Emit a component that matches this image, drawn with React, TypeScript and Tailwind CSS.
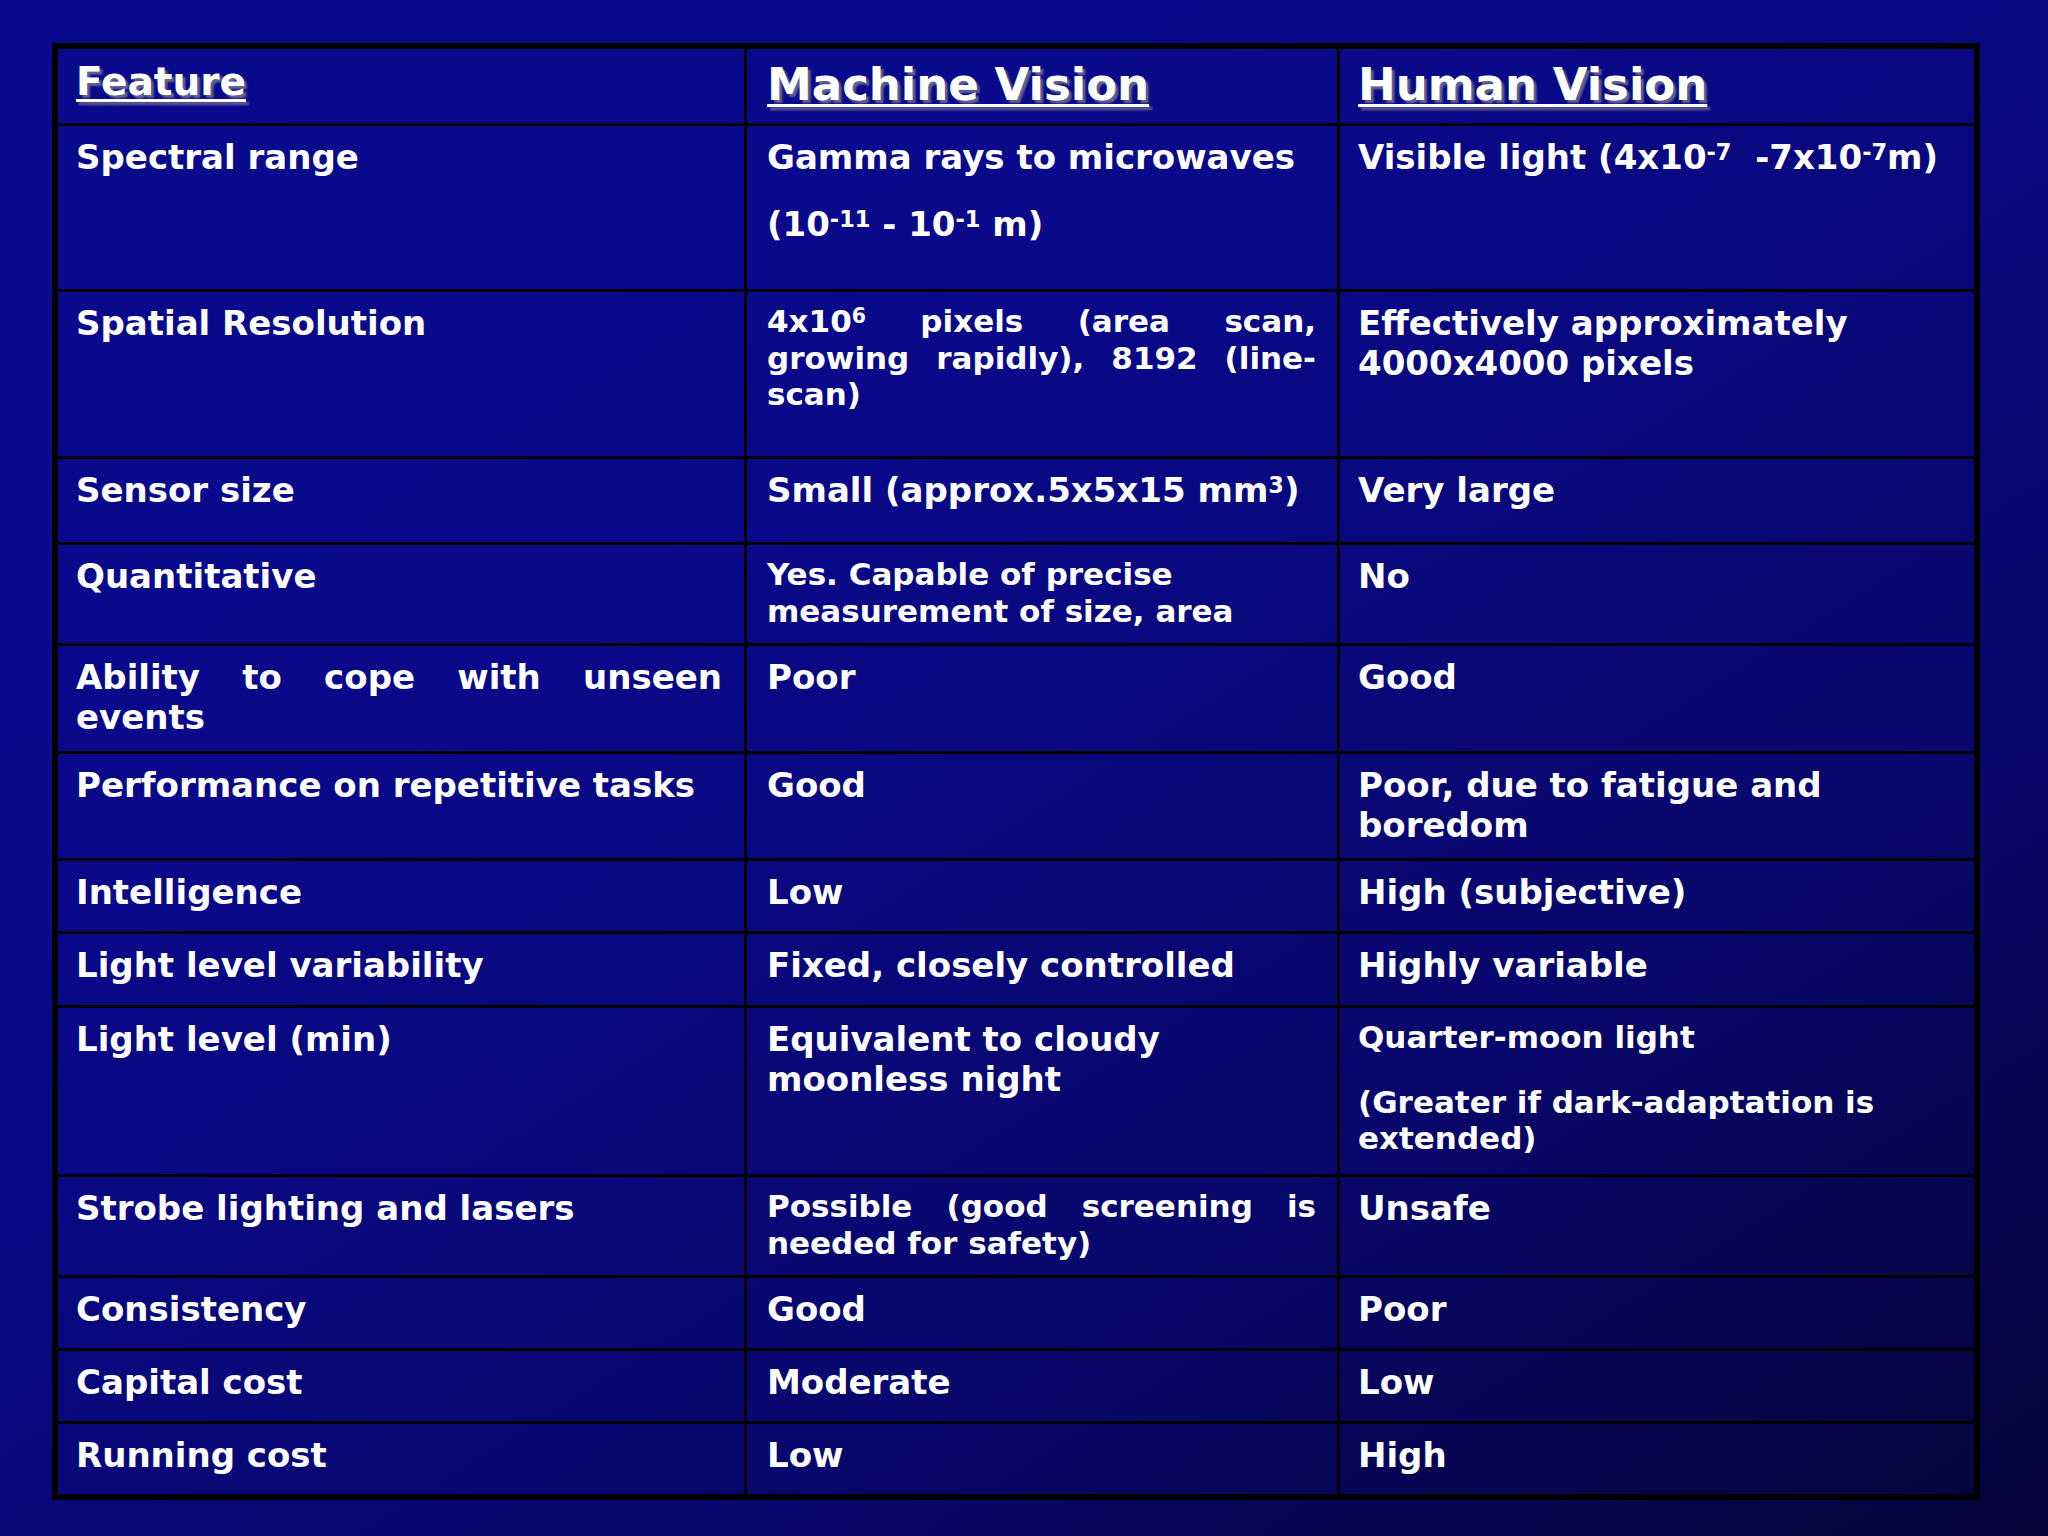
import React from 'react';

type Row = {
  height: string;
  feature: React.ReactNode;
  machine: React.ReactNode;
  human: React.ReactNode;
};

const body = 'text-[34px] leading-[40px]';
const small = 'text-[31px] leading-[36.5px]';
const justLine = 'block text-justify [text-align-last:justify]';

const Sup = ({ children }: { children: React.ReactNode }) => (
  <sup className="text-[66%] top-[-0.42em]">{children}</sup>
);

const rows: Row[] = [
  {
    height: 'h-[166px]',
    feature: <p className={body}>Spectral range</p>,
    machine: (
      <div className={body}>
        <p>Gamma rays to microwaves</p>
        <p className="mt-[27px]">
          (10<Sup>-11</Sup> - 10<Sup>-1</Sup> m)
        </p>
      </div>
    ),
    human: (
      <p className={body}>
        Visible light (4x10<Sup>-7</Sup>&nbsp; -7x10<Sup>-7</Sup>m)
      </p>
    ),
  },
  {
    height: 'h-[167px]',
    feature: <p className={body}>Spatial Resolution</p>,
    machine: (
      <div className={small}>
        <span className={justLine}>
          4x10<Sup>6</Sup> pixels (area scan,
        </span>
        <span className={justLine}>growing rapidly), 8192 (line-</span>
        <span className="block">scan)</span>
      </div>
    ),
    human: (
      <p className={body}>
        Effectively approximately
        <br />
        4000x4000 pixels
      </p>
    ),
  },
  {
    height: 'h-[86px]',
    feature: <p className={body}>Sensor size</p>,
    machine: (
      <p className={body}>
        Small (approx.5x5x15 mm<Sup>3</Sup>)
      </p>
    ),
    human: <p className={body}>Very large</p>,
  },
  {
    height: 'h-[101px]',
    feature: <p className={body}>Quantitative</p>,
    machine: (
      <p className={small}>
        Yes. Capable of precise
        <br />
        measurement of size, area
      </p>
    ),
    human: <p className={body}>No</p>,
  },
  {
    height: 'h-[108px]',
    feature: (
      <div className={body}>
        <span className={justLine}>Ability to cope with unseen</span>
        <span className="block">events</span>
      </div>
    ),
    machine: <p className={body}>Poor</p>,
    human: <p className={body}>Good</p>,
  },
  {
    height: 'h-[107px]',
    feature: <p className={body}>Performance on repetitive tasks</p>,
    machine: <p className={body}>Good</p>,
    human: (
      <p className={body}>
        Poor, due to fatigue and
        <br />
        boredom
      </p>
    ),
  },
  {
    height: 'h-[73px]',
    feature: <p className={body}>Intelligence</p>,
    machine: <p className={body}>Low</p>,
    human: <p className={body}>High (subjective)</p>,
  },
  {
    height: 'h-[74px]',
    feature: <p className={body}>Light level variability</p>,
    machine: <p className={body}>Fixed, closely controlled</p>,
    human: <p className={body}>Highly variable</p>,
  },
  {
    height: 'h-[169px]',
    feature: <p className={body}>Light level (min)</p>,
    machine: (
      <p className={body}>
        Equivalent to cloudy
        <br />
        moonless night
      </p>
    ),
    human: (
      <div className={small}>
        <p>Quarter-moon light</p>
        <p className="mt-[28px]">
          (Greater if dark-adaptation is
          <br />
          extended)
        </p>
      </div>
    ),
  },
  {
    height: 'h-[101px]',
    feature: <p className={body}>Strobe lighting and lasers</p>,
    machine: (
      <div className={small}>
        <span className={justLine}>Possible (good screening is</span>
        <span className="block">needed for safety)</span>
      </div>
    ),
    human: <p className={body}>Unsafe</p>,
  },
  {
    height: 'h-[73px]',
    feature: <p className={body}>Consistency</p>,
    machine: <p className={body}>Good</p>,
    human: <p className={body}>Poor</p>,
  },
  {
    height: 'h-[73px]',
    feature: <p className={body}>Capital cost</p>,
    machine: <p className={body}>Moderate</p>,
    human: <p className={body}>Low</p>,
  },
  {
    height: 'h-[73px]',
    feature: <p className={body}>Running cost</p>,
    machine: <p className={body}>Low</p>,
    human: <p className={body}>High</p>,
  },
];

const heading =
  'underline decoration-[3px] underline-offset-[4px] [text-shadow:3px_3px_2px_rgba(110,110,140,0.9)]';

export default function App() {
  return (
    <div
      className="w-[2048px] h-[1536px] overflow-hidden bg-[linear-gradient(148deg,#0a0a8e_0%,#09098a_35%,#08076c_70%,#060438_100%)] pt-[43px] pl-[52px] text-white font-bold"
      style={{ fontFamily: '"DejaVu Sans", Verdana, sans-serif' }}
    >
      <div className="w-[1928px] border-[6px] border-black">
        {/* Header */}
        <div className="grid grid-cols-[686px_593px_637px] h-[74px]">
          <div className="pl-[18px] pt-[9px]">
            <span className={`text-[39px] leading-[47px] ${heading}`}>Feature</span>
          </div>
          <div className="border-l-[3px] border-black pl-[20px] pt-[9px]">
            <span className={`text-[45px] leading-[54px] ${heading}`}>Machine Vision</span>
          </div>
          <div className="border-l-[3px] border-black pl-[18px] pt-[9px]">
            <span className={`text-[45px] leading-[54px] ${heading}`}>Human Vision</span>
          </div>
        </div>

        {rows.map((r, i) => (
          <div
            key={i}
            className={`grid grid-cols-[686px_593px_637px] border-t-[3px] border-black ${r.height}`}
          >
            <div className="pl-[18px] pr-[22px] pt-[11px]">{r.feature}</div>
            <div className="border-l-[3px] border-black pl-[20px] pr-[21px] pt-[11px]">{r.machine}</div>
            <div className="border-l-[3px] border-black pl-[18px] pr-[18px] pt-[11px]">{r.human}</div>
          </div>
        ))}
      </div>
    </div>
  );
}
